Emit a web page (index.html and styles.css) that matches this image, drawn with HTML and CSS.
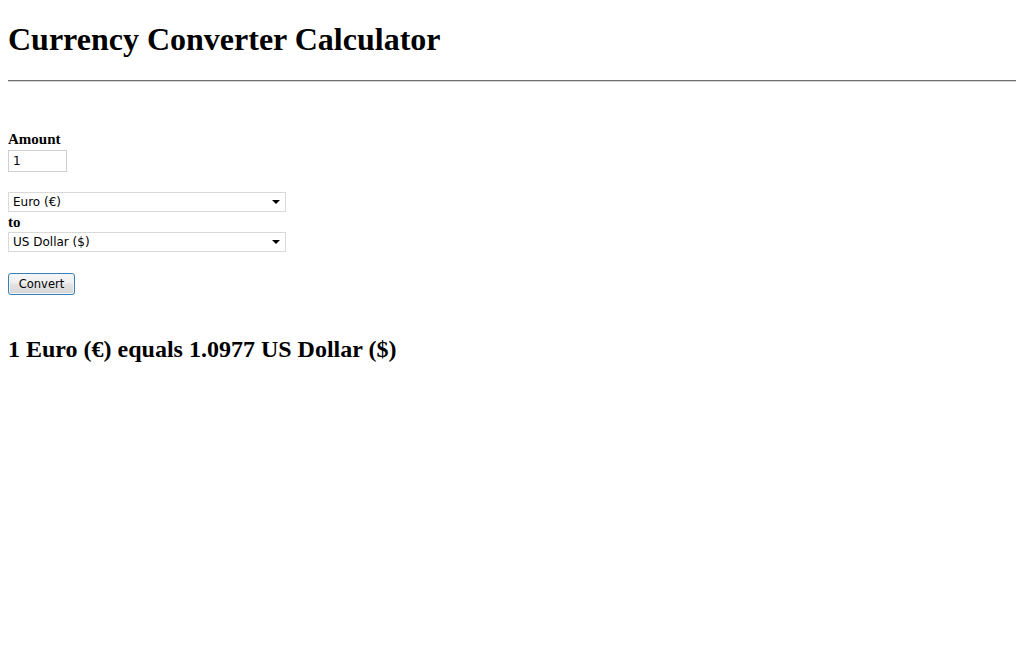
FILE: index.html
```html
<!DOCTYPE html>
<html>
<head>
<meta charset="utf-8">
<title>Currency Converter Calculator</title>
<link rel="stylesheet" href="styles.css">
</head>
<body>
<h1 class="title">Currency Converter Calculator</h1>
<hr class="rule">
<form class="converter">
  <label class="field-label" for="amount">Amount</label>
  <input class="amount" id="amount" type="text" value="1">
  <div class="select-box from">
    <span class="select-text">Euro (€)</span>
    <span class="select-arrow"></span>
  </div>
  <div class="field-label to">to</div>
  <div class="select-box">
    <span class="select-text">US Dollar ($)</span>
    <span class="select-arrow"></span>
  </div>
  <button class="convert" type="button">Convert</button>
</form>
<h2 class="result">1 Euro (€) equals 1.0977 US Dollar ($)</h2>
</body>
</html>
```
FILE: styles.css
```css
body {
  margin: 0 8px 8px;
  padding-top: 1px;
  font-family: "Liberation Serif", "Times New Roman", serif;
  color: #000;
  background: #fff;
}
.title {
  font-size: 32px;
  font-weight: bold;
  margin: 20.44px 0 21.44px;
}
.rule {
  border: none;
  border-top: 1px solid #6e6e6e;
  border-bottom: 1px solid #d8d8d8;
  margin: 0;
  height: 0;
}
.converter {
  margin: 48px 0 0;
  display: flex;
  flex-direction: column;
  align-items: flex-start;
}
.field-label {
  display: block;
  font-weight: bold;
  font-size: 15px;
  line-height: 18px;
}
.amount {
  box-sizing: border-box;
  width: 59px;
  height: 22px;
  margin: 2px 0 0;
  padding: 0 4px;
  border: 1px solid #cfcfcf;
  font-family: "DejaVu Sans", Verdana, sans-serif;
  font-size: 12px;
  color: #000;
  outline: none;
}
.select-box {
  box-sizing: border-box;
  width: 278px;
  height: 20px;
  border: 1px solid #d9d9d9;
  display: flex;
  align-items: center;
  justify-content: space-between;
  padding: 0 4px 0 4px;
  font-family: "DejaVu Sans", Verdana, sans-serif;
  font-size: 12px;
}
.select-box.from {
  margin-top: 20px;
}
.field-label.to {
  line-height: 20px;
}
.select-arrow {
  width: 0;
  height: 0;
  border-left: 4px solid transparent;
  border-right: 4px solid transparent;
  border-top: 4px solid #000;
  margin-right: 1px;
}
.convert {
  margin-top: 21px;
  box-sizing: border-box;
  width: 67px;
  height: 22px;
  padding: 0;
  border: 1px solid #3c7fb1;
  border-radius: 3px;
  background: linear-gradient(#f6f6f6 0%, #efefef 45%, #e3e3e3 50%, #d6d6d6 100%);
  box-shadow: inset 0 0 0 1px #eef7fc;
  font-family: "DejaVu Sans", Verdana, sans-serif;
  font-size: 11.5px;
  color: #000;
}
.result {
  font-size: 24px;
  font-weight: bold;
  line-height: 28px;
  margin: 40px 0 0;
}
```
